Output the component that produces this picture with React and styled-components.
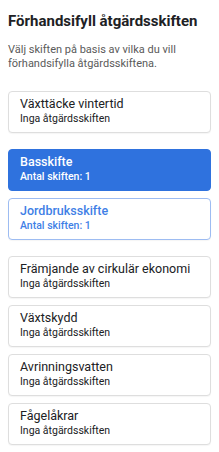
import React from "react";
import styled, { createGlobalStyle } from "styled-components";

const Global = createGlobalStyle`
  html, body { margin: 0; padding: 0; background: #fff; }
  body { font-family: Roboto, "Noto Sans", Arial, sans-serif; -webkit-font-smoothing: antialiased; }
  * { box-sizing: border-box; }
`;

const Page = styled.div`
  width: 219px;
  padding: 12px 8px 8px 8px;
  display: flex;
  flex-direction: column;
`;

const Title = styled.h1`
  margin: 0;
  font-size: 15px;
  font-weight: 700;
  line-height: 18px;
  color: #202124;
`;

const Desc = styled.p`
  margin: 12.5px 0 0 0;
  font-size: 11px;
  line-height: 14px;
  color: #5a5a5a;
`;

const Group = styled.div`
  display: flex;
  flex-direction: column;
  gap: 7px;
  margin-top: ${p => p.$mt}px;
`;

const Card = styled.button`
  display: flex;
  flex-direction: column;
  align-items: flex-start;
  text-align: left;
  height: 42px;
  padding: 2.5px 11px 0 11px;
  border-radius: 4px;
  font-family: inherit;
  cursor: pointer;
  border: 1px solid ${p => (p.$variant === "active" ? "#2f72de" : p.$variant === "outline" ? "#9dbcf2" : "#dedede")};
  background: ${p => (p.$variant === "active" ? "#2f72de" : "#fff")};
  color: ${p => (p.$variant === "active" ? "#fff" : p.$variant === "outline" ? "#3f7fe6" : "#202124")};
  box-shadow: ${p => (p.$variant === "active" ? "none" : "0 1px 1px rgba(0,0,0,0.04)")};
`;

const CardTitle = styled.span`
  font-size: 12.5px;
  line-height: 17px;
  font-weight: ${p => (p.$bold ? 500 : 400)};
`;

const CardSub = styled.span`
  font-size: 10.5px;
  line-height: 14px;
  margin-top: 0.5px;
  font-weight: ${p => (p.$bold ? 500 : 400)};
`;

const groups = [
  { mt: 20.5, items: [{ t: "Växttäcke vintertid", s: "Inga åtgärdsskiften" }] },
  {
    mt: 16,
    items: [
      { t: "Basskifte", s: "Antal skiften: 1", v: "active" },
      { t: "Jordbruksskifte", s: "Antal skiften: 1", v: "outline" },
    ],
  },
  {
    mt: 16,
    items: [
      { t: "Främjande av cirkulär ekonomi", s: "Inga åtgärdsskiften" },
      { t: "Växtskydd", s: "Inga åtgärdsskiften" },
      { t: "Avrinningsvatten", s: "Inga åtgärdsskiften" },
      { t: "Fågelåkrar", s: "Inga åtgärdsskiften" },
    ],
  },
];

export default function App() {
  return (
    <>
      <Global />
      <Page>
        <Title>Förhandsifyll åtgärdsskiften</Title>
        <Desc>
          Välj skiften på basis av vilka du vill förhandsifylla åtgärdsskiftena.
        </Desc>
        {groups.map((g, i) => (
          <Group key={i} $mt={g.mt}>
            {g.items.map(it => (
              <Card key={it.t} $variant={it.v}>
                <CardTitle $bold={!!it.v}>{it.t}</CardTitle>
                <CardSub $bold={!!it.v}>{it.s}</CardSub>
              </Card>
            ))}
          </Group>
        ))}
      </Page>
    </>
  );
}
